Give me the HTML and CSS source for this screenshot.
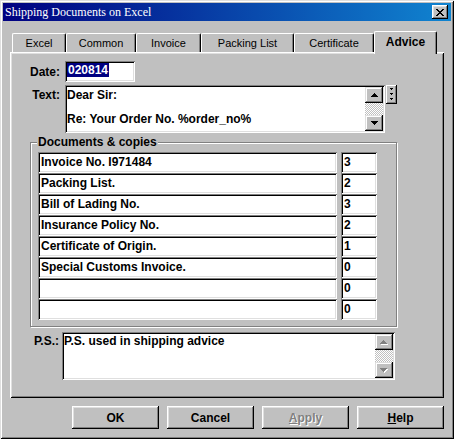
FILE: index.html
```html
<!DOCTYPE html>
<html>
<head>
<meta charset="utf-8">
<title>Shipping Documents on Excel</title>
<link rel="stylesheet" href="styles.css">
</head>
<body>
<div class="window">
  <div class="titlebar">
    <span class="title">Shipping Documents on Excel</span>
    <span class="close">
      <svg width="8" height="7" viewBox="0 0 8 7" shape-rendering="crispEdges"><path fill="#000" d="M0 0h2v1h-2z M6 0h2v1h-2z M1 1h2v1h-2z M5 1h2v1h-2z M2 2h4v1h-4z M3 3h2v1h-2z M2 4h4v1h-4z M1 5h2v1h-2z M5 5h2v1h-2z M0 6h2v1h-2z M6 6h2v1h-2z"/></svg>
    </span>
  </div>

  <div class="tabs">
    <div class="tab t-excel">Excel</div>
    <div class="tab t-common">Common</div>
    <div class="tab t-invoice">Invoice</div>
    <div class="tab t-packing">Packing List</div>
    <div class="tab t-cert">Certificate</div>
    <div class="tab t-advice active">Advice</div>
  </div>

  <div class="panel">
    <div class="row date-row">
      <div class="lbl">Date:</div>
      <div class="field date-field"><span class="sel">020814</span></div>
    </div>

    <div class="row text-row">
      <div class="lbl lbl-top">Text:</div>
      <div class="memo text-memo">
        <div class="memo-text">
          <div class="line">Dear Sir:</div>
          <div class="line"></div>
          <div class="line">Re: Your Order No. %order_no%</div>
        </div>
        <div class="vscroll">
          <div class="sbtn"><svg width="7" height="4" viewBox="0 0 7 4" shape-rendering="crispEdges"><path fill="#000" d="M3 0h1v1h1v1h1v1h1v1h-7v-1h1v-1h1v-1h1z"/></svg></div>
          <div class="track"></div>
          <div class="sbtn"><svg width="7" height="4" viewBox="0 0 7 4" shape-rendering="crispEdges"><path fill="#000" d="M0 0h7v1h-1v1h-1v1h-1v1h-1v-1h-1v-1h-1v-1h-1z"/></svg></div>
        </div>
      </div>
      <div class="grip">
        <svg width="3" height="14" viewBox="0 0 3 14" shape-rendering="crispEdges"><path fill="#000" d="M0 0h3v1h-3z M1 1h1v1h-1z M0 5h3v1h-3z M1 6h1v1h-1z M0 10h3v1h-3z M1 11h1v1h-1z"/></svg>
      </div>
    </div>

    <div class="group">
      <span class="legend">Documents &amp; copies</span>
      <div class="docrow"><div class="field doc">Invoice No. I971484</div><div class="field cnt">3</div></div>
      <div class="docrow"><div class="field doc">Packing List.</div><div class="field cnt">2</div></div>
      <div class="docrow"><div class="field doc">Bill of Lading No.</div><div class="field cnt">3</div></div>
      <div class="docrow"><div class="field doc">Insurance Policy No.</div><div class="field cnt">2</div></div>
      <div class="docrow"><div class="field doc">Certificate of Origin.</div><div class="field cnt">1</div></div>
      <div class="docrow"><div class="field doc">Special Customs Invoice.</div><div class="field cnt">0</div></div>
      <div class="docrow"><div class="field doc"></div><div class="field cnt">0</div></div>
      <div class="docrow"><div class="field doc"></div><div class="field cnt">0</div></div>
    </div>

    <div class="row ps-row">
      <div class="lbl lbl-ps">P.S.:</div>
      <div class="memo ps-memo">
        <div class="memo-text ps-text">P.S. used in shipping advice</div>
        <div class="vscroll">
          <div class="sbtn"><svg width="8" height="5" viewBox="0 0 8 5" shape-rendering="crispEdges"><path fill="#fff" d="M4 1h1v1h1v1h1v1h1v1h-7v-1h1v-1h1v-1h1z"/><path fill="#808080" d="M3 0h1v1h1v1h1v1h1v1h-7v-1h1v-1h1v-1h1z"/></svg></div>
          <div class="track"></div>
          <div class="sbtn"><svg width="8" height="5" viewBox="0 0 8 5" shape-rendering="crispEdges"><path fill="#fff" d="M1 1h7v1h-1v1h-1v1h-1v1h-1v-1h-1v-1h-1v-1h-1z"/><path fill="#808080" d="M0 0h7v1h-1v1h-1v1h-1v1h-1v-1h-1v-1h-1v-1h-1z"/></svg></div>
        </div>
      </div>
    </div>
  </div>

  <div class="buttons">
    <div class="btn">OK</div>
    <div class="btn">Cancel</div>
    <div class="btn disabled"><span class="u">A</span>pply</div>
    <div class="btn"><span class="u">H</span>elp</div>
  </div>
</div>
</body>
</html>
```

FILE: styles.css
```css
* { box-sizing: border-box; }
html, body { margin: 0; padding: 0; }
body {
  width: 454px;
  height: 439px;
  overflow: hidden;
  background: #c0c0c0;
  font-family: "Liberation Sans", Arial, sans-serif;
  font-size: 12px;
  font-weight: bold;
  color: #000;
}

.window {
  width: 454px;
  height: 439px;
  padding: 3px;
  background: #c0c0c0;
  display: flex;
  flex-direction: column;
  box-shadow: inset 1px 1px #dfdfdf, inset -1px -1px #000, inset 2px 2px #fff, inset -2px -2px #808080;
}

/* title bar */
.titlebar {
  height: 18px;
  flex: none;
  background: linear-gradient(to right, #000080, #1084d0);
  display: flex;
  align-items: center;
  justify-content: space-between;
  padding: 0 3px 0 2px;
}
.title {
  font-family: "Liberation Serif", "Times New Roman", serif;
  font-weight: normal;
  font-size: 12px;
  color: #fff;
  line-height: 14px;
}
.close {
  width: 16px;
  height: 14px;
  background: #c0c0c0;
  display: flex;
  align-items: center;
  justify-content: center;
  box-shadow: inset -1px -1px #000, inset 1px 1px #fff, inset -2px -2px #808080, inset 2px 2px #dfdfdf;
}
.close svg { display: block; }

/* tabs */
.tabs {
  flex: none;
  height: 21px;
  margin-top: 10px;
  padding-left: 9px;
  display: flex;
  align-items: flex-end;
  position: relative;
  z-index: 1;
}
.tab {
  height: 19px;
  background: #c0c0c0;
  border-top: 1px solid #fff;
  border-left: 1px solid #fff;
  border-right: 1px solid #000;
  border-top-left-radius: 2px;
  border-top-right-radius: 2px;
  box-shadow: inset -1px 0 #808080;
  display: flex;
  align-items: center;
  justify-content: center;
  font-weight: normal;
  font-size: 11px;
}
.t-excel { width: 54px; }
.t-common { width: 70px; }
.t-invoice { width: 65px; }
.t-packing { width: 93px; }
.t-cert { width: 80px; }
.t-advice { width: 63px; }
.tab.active {
  height: 23px;
  margin-bottom: -2px;
  padding-bottom: 2px;
  font-weight: bold;
  font-size: 12px;
}

/* panel */
.panel {
  flex: none;
  margin-left: 7px;
  width: 434px;
  height: 346px;
  padding-top: 9px;
  display: flex;
  flex-direction: column;
  box-shadow: inset 1px 1px #fff, inset -1px -1px #000, inset 2px 2px #dfdfdf, inset -2px -2px #808080;
}

.row { display: flex; }
.lbl {
  width: 50px;
  text-align: right;
  line-height: 14px;
  flex: none;
}
.date-row { height: 21px; align-items: center; gap: 5px; }
.text-row { margin-top: 3px; height: 48px; align-items: flex-start; gap: 5px; }
.lbl-top { padding-top: 3px; }

.field {
  background: #fff;
  box-shadow: inset 1px 1px #808080, inset -1px -1px #fff, inset 2px 2px #000, inset -2px -2px #dfdfdf;
}
.date-field {
  width: 70px;
  height: 21px;
  padding: 2px 2px 0 2px;
  line-height: 14px;
}
.sel {
  display: inline-block;
  background: #000080;
  color: #fff;
  line-height: 14px;
  padding: 0 1px;
}

.memo {
  background: #fff;
  display: flex;
  padding: 2px;
  box-shadow: inset 1px 1px #808080, inset -1px -1px #fff, inset 2px 2px #000, inset -2px -2px #dfdfdf;
}
.text-memo { width: 320px; height: 48px; }
.memo-text { flex: 1; padding-top: 2px; line-height: 12px; }
.line { height: 12px; white-space: nowrap; }

.vscroll {
  width: 18px;
  flex: none;
  display: flex;
  flex-direction: column;
}
.sbtn {
  height: 16px;
  flex: none;
  background: #c0c0c0;
  display: flex;
  align-items: center;
  justify-content: center;
  box-shadow: inset -1px -1px #000, inset 1px 1px #dfdfdf, inset -2px -2px #808080, inset 2px 2px #fff;
}
.sbtn svg { display: block; }
.track {
  flex: 1;
  background: repeating-conic-gradient(#c0c0c0 0 25%, #fff 0 50%) 0 0 / 2px 2px;
}

.grip {
  width: 11px;
  height: 19px;
  margin-left: -4px;
  display: flex;
  align-items: center;
  justify-content: center;
  background: #c0c0c0;
  box-shadow: inset -1px -1px #000, inset 1px 1px #fff, inset -2px -2px #808080;
}
.grip svg { display: block; }

/* group box */
.group {
  position: relative;
  margin-top: 9px;
  margin-left: 20px;
  width: 367px;
  height: 185px;
  border: 1px solid #808080;
  box-shadow: inset 1px 1px #fff, 1px 1px #fff;
  padding: 9px 0 0 7px;
  display: flex;
  flex-direction: column;
}
.legend {
  position: absolute;
  top: -8px;
  left: 6px;
  padding: 0 1px;
  line-height: 14px;
  background: #c0c0c0;
}
.docrow { display: flex; gap: 4px; height: 21px; }
.doc, .cnt {
  height: 21px;
  line-height: 21px;
  padding-left: 3px;
  white-space: nowrap;
}
.doc { width: 299px; }
.cnt { width: 36px; }

/* P.S. */
.ps-row { margin-top: 5px; gap: 3px; height: 48px; }
.lbl-ps { width: 49px; padding-top: 2px; }
.ps-memo { width: 333px; height: 48px; }
.ps-text { padding-top: 0; line-height: 14px; white-space: nowrap; }

/* buttons */
.buttons {
  flex: none;
  margin-top: 8px;
  display: flex;
  justify-content: flex-end;
  gap: 8px;
  padding-right: 7px;
}
.btn {
  width: 87px;
  height: 23px;
  display: flex;
  align-items: center;
  justify-content: center;
  background: #c0c0c0;
  box-shadow: inset -1px -1px #000, inset 1px 1px #fff, inset -2px -2px #808080, inset 2px 2px #dfdfdf;
}
.btn.disabled {
  color: #808080;
  text-shadow: 1px 1px 0 #fff;
}
.u { text-decoration: underline; }
```
